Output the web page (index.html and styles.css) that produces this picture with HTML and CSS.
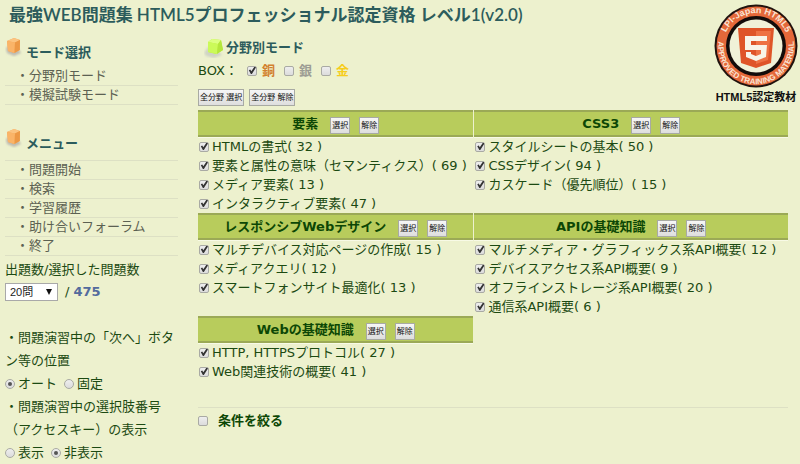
FILE: index.html
```html
<!DOCTYPE html>
<html lang="ja">
<head>
<meta charset="utf-8">
<title>最強WEB問題集 HTML5プロフェッショナル認定資格 レベル1(v2.0)</title>
<link rel="stylesheet" href="styles.css">
</head>
<body>
<svg class="defs" aria-hidden="true">
  <defs>
    <filter id="soft" x="-30%" y="-30%" width="160%" height="160%"><feGaussianBlur stdDeviation="1"/></filter>
    <symbol id="cube-orange" viewBox="0 0 18 20">
      <path d="M1 11 L4 9 L14 13 L16 16 L9 19 L2 16Z" fill="#aaa4a4" opacity=".7" filter="url(#soft)"/>
      <path d="M2 4 L9 1 L15 3 L15 13 L9 16 L3 14Z" fill="#f4a656"/>
      <path d="M2 4 L9 1 L15 3 L10 5.500Z" fill="#fbc481"/>
      <path d="M2 4 L10 5.500 L9.500 16 L3 14Z" fill="#fab468"/>
      <path d="M10 5.500 L15 3 L14.500 13 L9.500 16Z" fill="#ec9845"/>
    </symbol>
    <symbol id="cube-green" viewBox="0 0 20 20">
      <path d="M0 15 L4 9 L15 14 L18 17 L10 20 L2 18Z" fill="#c9cdc2" opacity=".8" filter="url(#soft)"/>
      <path d="M4 4 L8 1 L17 2 L19 12 L12 16 L4 14Z" fill="#bfee3f"/>
      <path d="M4 4 L8 1 L17 2 L14 6Z" fill="#dcff83"/>
      <path d="M4 4 L14 6 L13 16 L4 14Z" fill="#cbfa59"/>
      <path d="M14 6 L17 2 L19 12 L13 16Z" fill="#b4e63c"/>
    </symbol>
  </defs>
</svg>

<header class="top">
  <h1>最強WEB問題集 HTML5プロフェッショナル認定資格 レベル1(v2.0)</h1>
  <div class="badge">
    <svg viewBox="0 0 84 84" role="img" aria-label="LPI-Japan HTML5 APPROVED TRAINING MATERIAL">
      <circle cx="42" cy="42" r="41.500" fill="#21130f"/>
      <circle cx="42" cy="42" r="39.500" fill="#e4683a"/>
      <circle cx="42" cy="42" r="30" fill="#130c0a"/>
      <circle cx="42" cy="42" r="26.500" fill="#f0f1d8"/>
      <path d="M24 24 H60 L57 59 L42 64 L27 59Z" fill="#df5428"/>
      <path d="M42 27 H57 L54 56 L42 60Z" fill="#ee7143"/>
      <path d="M31 32 H53 V37 H37 V41 H53 L52 53 L42 57 L32 53 V48 H37 V50 L42 52 L47 50 V46 H31Z" fill="#f8f4e8"/>
      <path id="arc-top" d="M10 34 A33 33 0 0 1 74 34" fill="none"/>
      <path id="arc-bottom" d="M4.500 36 A38 38 0 1 0 79.500 36" fill="none"/>
      <text class="ring"><textPath href="#arc-top" startOffset="50%">LPI-Japan HTML5</textPath></text>
      <text class="ring ring-low"><textPath href="#arc-bottom" startOffset="50%">APPROVED TRAINING MATERIAL</textPath></text>
    </svg>
    <p>HTML5認定教材</p>
  </div>
</header>

<div class="columns">
  <aside>
    <h2><svg class="cube" aria-hidden="true"><use href="#cube-orange"/></svg>モード選択</h2>
    <ul class="menu">
      <li><a href="#">・分野別モード</a></li>
      <li><a href="#">・模擬試験モード</a></li>
    </ul>
    <h2><svg class="cube" aria-hidden="true"><use href="#cube-orange"/></svg>メニュー</h2>
    <ul class="menu ruled">
      <li><a href="#">・問題開始</a></li>
      <li><a href="#">・検索</a></li>
      <li><a href="#">・学習履歴</a></li>
      <li><a href="#">・助け合いフォーラム</a></li>
      <li><a href="#">・終了</a></li>
    </ul>
    <label class="amount-label" for="amount">出題数/選択した問題数</label>
    <div class="amount">
      <span class="select"><select id="amount"><option>20問</option></select></span>
      <span>/ <b>475</b></span>
    </div>
    <fieldset>
      <legend>・問題演習中の「次へ」ボタン等の位置</legend>
      <div class="options">
        <label><input type="radio" name="position" checked>オート</label>
        <label><input type="radio" name="position">固定</label>
      </div>
    </fieldset>
    <fieldset>
      <legend>・問題演習中の選択肢番号（アクセスキー）の表示</legend>
      <div class="options">
        <label><input type="radio" name="keys">表示</label>
        <label><input type="radio" name="keys" checked>非表示</label>
      </div>
    </fieldset>
  </aside>

  <main>
    <h2 class="main-title"><svg class="cube" aria-hidden="true"><use href="#cube-green"/></svg>分野別モード</h2>
    <div class="boxes">
      <span>BOX：</span>
      <label class="bronze"><input type="checkbox" checked>銅</label>
      <label class="silver"><input type="checkbox">銀</label>
      <label class="gold"><input type="checkbox">金</label>
    </div>
    <div class="all">
      <button type="button">全分野 選択</button>
      <button type="button">全分野 解除</button>
    </div>
    <div class="fields">
      <section>
        <h3>要素 <button type="button">選択</button><button type="button">解除</button></h3>
        <label><input type="checkbox" checked>HTMLの書式( 32 )</label>
        <label><input type="checkbox" checked>要素と属性の意味（セマンティクス）( 69 )</label>
        <label><input type="checkbox" checked>メディア要素( 13 )</label>
        <label><input type="checkbox" checked>インタラクティブ要素( 47 )</label>
      </section>
      <section>
        <h3>CSS3 <button type="button">選択</button><button type="button">解除</button></h3>
        <label><input type="checkbox" checked>スタイルシートの基本( 50 )</label>
        <label><input type="checkbox" checked>CSSデザイン( 94 )</label>
        <label><input type="checkbox" checked>カスケード（優先順位）( 15 )</label>
      </section>
      <section>
        <h3>レスポンシブWebデザイン <button type="button">選択</button><button type="button">解除</button></h3>
        <label><input type="checkbox" checked>マルチデバイス対応ページの作成( 15 )</label>
        <label><input type="checkbox" checked>メディアクエリ( 12 )</label>
        <label><input type="checkbox" checked>スマートフォンサイト最適化( 13 )</label>
      </section>
      <section>
        <h3>APIの基礎知識 <button type="button">選択</button><button type="button">解除</button></h3>
        <label><input type="checkbox" checked>マルチメディア・グラフィックス系API概要( 12 )</label>
        <label><input type="checkbox" checked>デバイスアクセス系API概要( 9 )</label>
        <label><input type="checkbox" checked>オフラインストレージ系API概要( 20 )</label>
        <label><input type="checkbox" checked>通信系API概要( 6 )</label>
      </section>
      <section>
        <h3>Webの基礎知識 <button type="button">選択</button><button type="button">解除</button></h3>
        <label><input type="checkbox" checked>HTTP, HTTPSプロトコル( 27 )</label>
        <label><input type="checkbox" checked>Web関連技術の概要( 41 )</label>
      </section>
    </div>
    <label class="narrow"><input type="checkbox">条件を絞る</label>
  </main>
</div>
</body>
</html>
```

FILE: styles.css
```css
* { box-sizing: border-box; }

body {
  margin: 0;
  background: #edf1ce;
  color: #1c4a12;
  font: 13px/19px "DejaVu Sans", "Noto Sans CJK JP", sans-serif;
}

h1, h2, h3, p, ul { margin: 0; padding: 0; }
ul { list-style: none; }
a { color: #5c6152; text-decoration: none; }
.defs { position: absolute; width: 0; height: 0; }

.top { position: relative; padding: 2px 9px 4px; }
h1 {
  color: #2c5c5c;
  font: 600 17px/26px Lato, "Noto Sans CJK JP", sans-serif;
}
h2 {
  display: flex;
  align-items: flex-end;
  color: #2c5c5c;
  font-size: 13px;
  line-height: 19px;
}
.cube { flex: none; width: 18px; height: 20px; }

.badge {
  position: absolute;
  top: 4px;
  right: 2px;
  width: 84px;
  color: #111;
  font: bold 11px/18px "Liberation Sans", "Noto Sans CJK JP", sans-serif;
  text-align: center;
  white-space: nowrap;
}
.badge svg { display: block; width: 84px; height: 84px; }
.badge p { display: flex; justify-content: center; }
.ring { fill: #f9e3d3; font: bold 9px "Liberation Sans", sans-serif; text-anchor: middle; }
.ring-low { font-size: 8px; }

.columns {
  display: grid;
  grid-template-columns: 173px minmax(0, 1fr);
  gap: 20px;
  padding: 5px 12px 0 5px;
}

/* sidebar */
aside h2 { height: 28px; padding-bottom: 3px; gap: 3px; }
aside h2 .cube { margin-bottom: 5px; }
.menu { margin: 2px 0 23px; }
.menu li { height: 19px; padding-left: 11px; border-bottom: 1px solid #dde0c4; line-height: 18px; }
.ruled { border-top: 1px solid #dde0c4; margin: 4px 0; }
.amount-label { display: block; }
.amount { display: flex; align-items: center; gap: 7px; margin: 3px 0 25px; }
.amount b { color: #536b9d; }
.select { position: relative; }
.select::after {
  content: "";
  position: absolute;
  top: 6px;
  right: 6px;
  border: 3px solid transparent;
  border-top: 6px solid #111;
  pointer-events: none;
}
select {
  display: block;
  appearance: none;
  width: 53px;
  height: 18px;
  padding: 0 4px;
  border: 1px solid #a9a9a9;
  border-radius: 0;
  background: #fff;
  color: #222;
  font: 11px/16px "Liberation Sans", "Noto Sans CJK JP", sans-serif;
}
fieldset { margin: 0; padding: 0; border: 0; line-height: 23px; }
legend { padding: 0; }
.options { display: flex; gap: 7px; }
.options label, .boxes label, section label, .narrow { display: flex; align-items: center; white-space: nowrap; }

/* controls */
input {
  appearance: none;
  flex: none;
  position: relative;
  width: 10px;
  height: 10px;
  margin: 0 3px 0 0;
  border: 1px solid #a9aaa4;
  border-radius: 2px;
  background: linear-gradient(#eee, #dcdcdc);
}
input[type="radio"] { border-radius: 50%; }
input:checked::before { content: ""; position: absolute; inset: 0; background: #333; }
input[type="checkbox"]:checked::before { clip-path: polygon(10% 48%, 28% 38%, 42% 60%, 82% 0, 100% 12%, 48% 94%, 36% 94%); }
input[type="radio"]:checked::before { inset: 2px; border-radius: 50%; background: #555; }
button {
  height: 17px;
  padding: 0 2px;
  border: 1px solid #a8aaa3;
  border-radius: 0;
  background: linear-gradient(#f6f6f6, #dedede);
  color: #111;
  font: 8px/15px "Liberation Sans", "Noto Sans CJK JP", sans-serif;
}

/* main */
.main-title { height: 22px; padding-left: 6px; gap: 2px; line-height: 24px; align-items: center; }
.main-title .cube { width: 20px; }
.boxes { display: flex; gap: 9px; padding-top: 2px; }
.boxes label { font-weight: bold; }
.boxes input { margin-right: 5px; }
.bronze { color: #d2812e; }
.silver { color: #9c9d94; }
.gold { color: #f6cd1c; }
.all { display: flex; gap: 5px; margin: 9px 0 4px; }
.all button { padding: 0 1px; }
.fields { display: grid; grid-template-columns: 275fr 313fr; column-gap: 1px; }
section { min-height: 103px; }
section:last-child { min-height: 91px; }
h3 {
  display: flex;
  align-items: center;
  justify-content: center;
  height: 27px;
  border: solid #9ba956;
  border-width: 2px 0;
  background: #b8cc5c;
  box-shadow: 0 1px #f8fae6;
  color: #0c4705;
  font-size: 13px;
}
h3 button { margin: 4px 0 0 9px; padding: 0 1px; }
h3 button:first-child { margin-left: 12px; }
section label { height: 19px; padding-left: 1px; }
.narrow { padding-top: 2px; border-top: 1px solid #dde0c4; font-weight: bold; color: #0c4705; line-height: 21px; }
.narrow input { margin-right: 10px; }
```
